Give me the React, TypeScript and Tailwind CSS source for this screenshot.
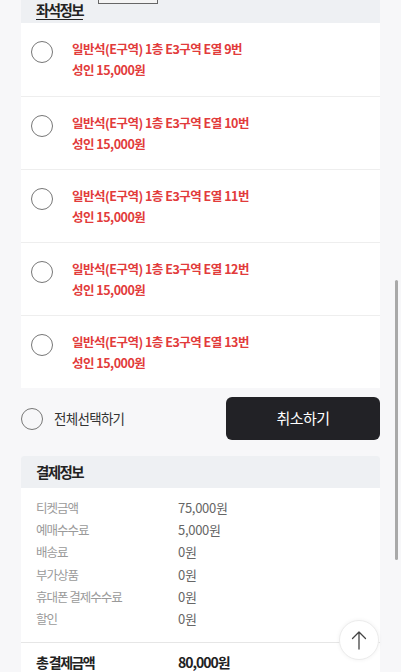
import React from "react";

const seats = ["9", "10", "11", "12", "13"];
const fees: [string, string][] = [
  ["티켓금액", "75,000원"],
  ["예매수수료", "5,000원"],
  ["배송료", "0원"],
  ["부가상품", "0원"],
  ["휴대폰 결제수수료", "0원"],
  ["할인", "0원"],
];

export default function App() {
  return (
    <div
      className="relative w-[401px] h-[672px] overflow-hidden bg-[#f7f7f9] px-[21px]"
      style={{ fontFamily: '"Noto Sans CJK KR", "Noto Sans", sans-serif' }}
    >
      {/* seat info card */}
      <div className="bg-white">
        <div className="relative h-[23px] bg-[#eef0f3] px-[15px]">
          <span className="block text-[14.5px] font-bold leading-[20px] tracking-[-1.6px] text-[#222] underline underline-offset-[3px]">
            좌석정보
          </span>
          <div className="absolute left-[77px] top-[-11px] w-[60px] h-[15px] border border-[#666] bg-[#f4f4f4]" />
        </div>
        {seats.map((n, i) => (
          <div
            key={n}
            className={`flex items-start h-[73px] pt-[15px] pl-[10px] ${i > 0 ? "border-t border-[#eeeeee]" : ""}`}
          >
            <div className="mt-[3px] w-[22px] h-[22px] rounded-full border-[1.5px] border-[#777] shrink-0" />
            <div className="ml-[19px] text-[12.5px] font-bold leading-[21px] tracking-[-0.5px] text-[#e23b3b]">
              <div>일반석(E구역) 1층 E3구역 E열 {n}번</div>
              <div>성인 15,000원</div>
            </div>
          </div>
        ))}
      </div>

      {/* select all + cancel */}
      <div className="flex items-center justify-between mt-[9px]">
        <div className="flex items-center">
          <div className="w-[22px] h-[22px] rounded-full border-[1.5px] border-[#777]" />
          <span className="ml-[11px] text-[13.5px] tracking-[-0.7px] text-[#333]">전체선택하기</span>
        </div>
        <button className="w-[154px] h-[43px] rounded-[6px] bg-[#222226] text-white text-[15px] tracking-[-0.5px]">
          취소하기
        </button>
      </div>

      {/* payment info */}
      <div className="mt-[16px] bg-white rounded-t-[3px] overflow-hidden">
        <div className="h-[32px] bg-[#eef0f3] px-[15px] flex items-center">
          <span className="text-[14.5px] font-bold tracking-[-1.6px] text-[#222]">결제정보</span>
        </div>
        <div className="px-[15px] pt-[9px] pb-[12px]">
          {fees.map(([k, v]) => (
            <div key={k} className="flex text-[12.5px] leading-[22.2px]">
              <span className="w-[142px] tracking-[-1px] text-[#9a9a9a]">{k}</span>
              <span className="text-[13px] tracking-[-0.3px] text-[#666]">{v}</span>
            </div>
          ))}
        </div>
        <div className="border-t border-[#e6e6e6] px-[15px] pt-[8px] flex font-bold leading-[22px] text-[#222]">
          <span className="w-[142px] text-[14px] tracking-[-1.6px]">총 결제금액</span>
          <span className="text-[14px] tracking-[-1px]">80,000원</span>
        </div>
      </div>

      {/* scroll to top button */}
      <div className="absolute left-[339px] top-[620px] w-[40px] h-[40px] rounded-full bg-white border border-[#ececec] shadow-[0_0_4px_rgba(0,0,0,0.06)] flex items-center justify-center">
        <svg width="16" height="20" viewBox="0 0 16 20" fill="none" stroke="#444" strokeWidth="1.3" strokeLinecap="round" strokeLinejoin="round">
          <path d="M8 2v17M1.5 8.5L8 2l6.5 6.5" />
        </svg>
      </div>

      {/* scrollbar */}
      <div className="absolute left-[395px] top-[280px] w-[3px] h-[280px] rounded-full bg-[#a9a9a9]" />
    </div>
  );
}
